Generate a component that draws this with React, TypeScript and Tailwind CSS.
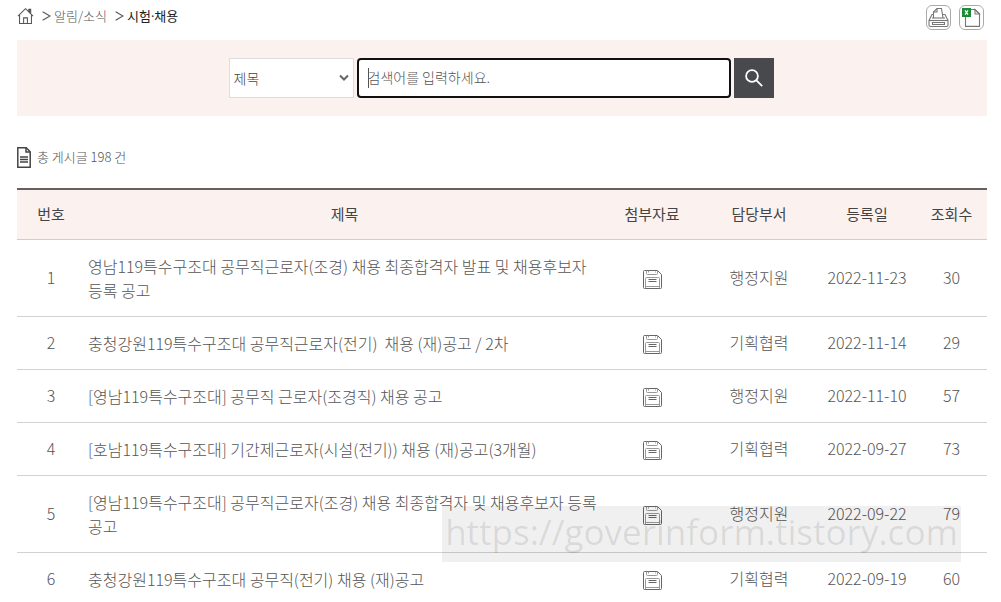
import React from 'react'
import { useState, ChangeEvent, FormEvent } from 'react'

interface PostProps {
  no: number;
  title: string;
  dept: string;
  date: string;
  views: number;
}

const posts: PostProps[] = [
  { no: 1, title: '영남119특수구조대 공무직근로자(조경) 채용 최종합격자 발표 및 채용후보자 등록 공고', dept: '행정지원', date: '2022-11-23', views: 30 },
  { no: 2, title: '충청강원119특수구조대 공무직근로자(전기)\u00a0 채용 (재)공고 / 2차', dept: '기획협력', date: '2022-11-14', views: 29 },
  { no: 3, title: '[영남119특수구조대] 공무직 근로자(조경직) 채용 공고', dept: '행정지원', date: '2022-11-10', views: 57 },
  { no: 4, title: '[호남119특수구조대] 기간제근로자(시설(전기)) 채용 (재)공고(3개월)', dept: '기획협력', date: '2022-09-27', views: 73 },
  { no: 5, title: '[영남119특수구조대] 공무직근로자(조경) 채용 최종합격자 및 채용후보자 등록 공고', dept: '행정지원', date: '2022-09-22', views: 79 },
  { no: 6, title: '충청강원119특수구조대 공무직(전기) 채용 (재)공고', dept: '기획협력', date: '2022-09-19', views: 60 },
]

const HomeIcon = () => (
  <svg width="17" height="18" viewBox="0 0 18 18" fill="none" stroke="#555" strokeWidth="1.1">
    <path d="M1 9.2 9 1.2l8 8" />
    <path d="M2.7 8v9h12.6V8" />
    <path d="M12.5 4.5V2h2v4.4" fill="#555" />
    <path d="M7 17v-6h4v6" />
  </svg>
)

const ArrowIcon = () => (
  <svg width="9" height="10" viewBox="0 0 9 10" fill="none" stroke="#555" strokeWidth="1.1">
    <path d="M.6.8 8 5 .6 9.2" />
  </svg>
)

const PrintIcon = () => (
  <svg width="21" height="21" viewBox="0 0 21 21" fill="none" stroke="#777" strokeWidth="1.1">
    <path d="M5.5 11V5L9 1.5h4.5L15 11" />
    <path d="M5.5 5H9V1.5" />
    <path d="M5.5 7.5H4L1 13.5V18q0 1.5 1.5 1.5h16q1.5 0 1.5-1.5v-4.5l-3-6h-2.4" />
    <path d="M4 11h13" />
    <path d="M1 13.5h19" />
    <path d="M4.5 15.5h12v2h-12z" />
  </svg>
)

const ExcelIcon = () => (
  <svg width="19" height="19" viewBox="0 0 19 19" fill="none">
    <path d="M3.5 8v10.4h14V6L13 1.5H9" stroke="#777" strokeWidth="1.1" />
    <path d="M13 1.5V6h4.5z" stroke="#777" strokeWidth="1.1" />
    <path d="M0 0h9v9H0z" fill="#1e8a35" />
    <path d="m3 2.4 3 4.2M6 2.4 3 6.6" stroke="#fff" strokeWidth="1.2" />
  </svg>
)

const SearchIcon = () => (
  <svg width="18" height="18" viewBox="0 0 18 18" fill="none" stroke="#fff" strokeWidth="1.8">
    <circle cx="7" cy="7" r="5.9" />
    <path d="m11.2 11.2 6 6" />
  </svg>
)

const DocIcon = () => (
  <svg width="14" height="21" viewBox="0 0 14 21" fill="none" stroke="#444" strokeWidth="1.5">
    <path d="M.8.8h8.4l4 4v15.4H.8z" />
    <path d="M9 .8V5h4.2" />
    <path d="M3 10h8M3 12.5h8M3 15h8" />
  </svg>
)

const SaveIcon = () => (
  <svg width="19" height="19" viewBox="0 0 19 19" fill="none" stroke="#999" strokeWidth="1">
    <path d="M1.5.5h13l4 4v13q0 1-1 1h-16q-1 0-1-1v-16q0-1 1-1z" stroke="#666" />
    <path d="M3.5.5v3q0 1 1 1h9q1 0 1-1v-3M5.5.5v2M12.5 1.5v1" />
    <path d="M2.5 18.5v-10q0-1 1-1h12q1 0 1 1v10" />
    <path d="M5.5 9.5h8M5.5 11.5h8" stroke="#666" />
    <path d="M2.5 16.5h14" />
  </svg>
)

const App = () => {
  const [field, setField] = useState<string>('title')
  const [keyword, setKeyword] = useState<string>('')

  const handleSubmit = (event: FormEvent) => {
    event.preventDefault();
  };

  return (
    <div className="relative h-screen overflow-hidden bg-white pl-[17px] pr-[14px] font-['Noto_Sans_CJK_KR',sans-serif] text-[#555]">
      <header className="flex h-10 items-start justify-between">
        <nav className="flex h-8 items-center text-[13px]">
          <a href="#home" aria-label="홈"><HomeIcon /></a>
          <span className="ml-2 mr-[3px]"><ArrowIcon /></span>
          <a href="#news" className="font-light">알림/소식</a>
          <span className="ml-2 mr-[3px]"><ArrowIcon /></span>
          <a href="#exam" className="text-[#222]">시험<span className="font-['Open_Sans']">·</span>채용</a>
        </nav>
        <div className="flex gap-2 pr-[3px] pt-[5px]">
          <button type="button" aria-label="인쇄" className="flex h-[25px] w-[25px] items-center justify-center rounded-md border border-[#aaa]"><PrintIcon /></button>
          <button type="button" aria-label="엑셀" className="flex h-[25px] w-[25px] items-center justify-center rounded-md border border-[#aaa]"><ExcelIcon /></button>
        </div>
      </header>

      <form onSubmit={handleSubmit} className="flex h-[76px] items-center justify-center gap-[3px] bg-[#fbf2f0] pr-0.5 text-sm">
        <div className="relative">
          <select
            aria-label="검색 구분"
            className="h-10 w-[125px] appearance-none border border-[#ddd] bg-white pl-1 font-light text-[#444]"
            value={field}
            onChange={(event: ChangeEvent<HTMLSelectElement>) => setField(event.target.value)}
          >
            <option value="title">제목</option>
            <option value="content">내용</option>
          </select>
          <svg className="pointer-events-none absolute right-[5px] top-4" width="10" height="8" viewBox="0 0 10 8" fill="none" stroke="#666" strokeWidth="2">
            <path d="m1 1.5 4 4 4-4" />
          </svg>
        </div>
        <div className="relative">
          <input
            type="text"
            aria-label="검색어"
            placeholder="검색어를 입력하세요."
            className="peer h-10 w-[374px] rounded border-2 border-[#101010] bg-white px-[9px] pb-0.5 font-light outline-none placeholder:text-[#555]"
            value={keyword}
            onChange={(event: ChangeEvent<HTMLInputElement>) => setKeyword(event.target.value)}
          />
          <span className="pointer-events-none absolute left-[11px] top-[10px] h-5 w-px bg-[#555] peer-focus:hidden" />
        </div>
        <button type="submit" aria-label="검색" className="flex h-10 w-10 items-center justify-center bg-[#48494d]"><SearchIcon /></button>
      </form>

      <div className="mb-5 mt-[30px] flex h-[22px] items-center gap-[6px] text-[13px] font-light">
        <DocIcon />
        <p>총 게시글 198 건</p>
      </div>

      <table className="w-full table-fixed border-collapse text-center leading-6">
        <colgroup>
          <col className="w-[68px]" />
          <col />
          <col className="w-24" />
          <col className="w-[118px]" />
          <col className="w-[98px]" />
          <col className="w-[71px]" />
        </colgroup>
        <thead className="border-t-2 border-[#666062] bg-[#fbf2f0] text-[15px] text-[#444]">
          <tr className="h-[50px] border-b border-b-[#d2cccc]">
            <th className="font-normal">번호</th>
            <th className="font-normal">제목</th>
            <th className="font-normal">첨부자료</th>
            <th className="font-normal">담당부서</th>
            <th className="font-normal">등록일</th>
            <th className="font-normal">조회수</th>
          </tr>
        </thead>
        <tbody className="font-light">
          {posts.map((post) => (
            <tr key={post.no} className="border-b border-[#d2d2d2]">
              <td className="pb-0.5">{post.no}</td>
              <td className="break-keep px-[3px] py-[14px] text-left"><a href={`#post-${post.no}`}>{post.title}</a></td>
              <td className="pb-0.5"><a href={`#file-${post.no}`} aria-label="첨부파일" className="inline-block align-middle"><SaveIcon /></a></td>
              <td className="pb-0.5">{post.dept}</td>
              <td className="pb-0.5">{post.date}</td>
              <td className="pb-0.5">{post.views}</td>
            </tr>
          ))}
        </tbody>
      </table>

      <div className="pointer-events-none absolute right-10 top-[506px] flex h-14 w-[519px] items-center justify-center bg-black/[0.06] pb-1 font-['Open_Sans',sans-serif] text-[35px] text-black/10">
        https://goverinform.tistory.com
      </div>
    </div>
  )
}

export default App
